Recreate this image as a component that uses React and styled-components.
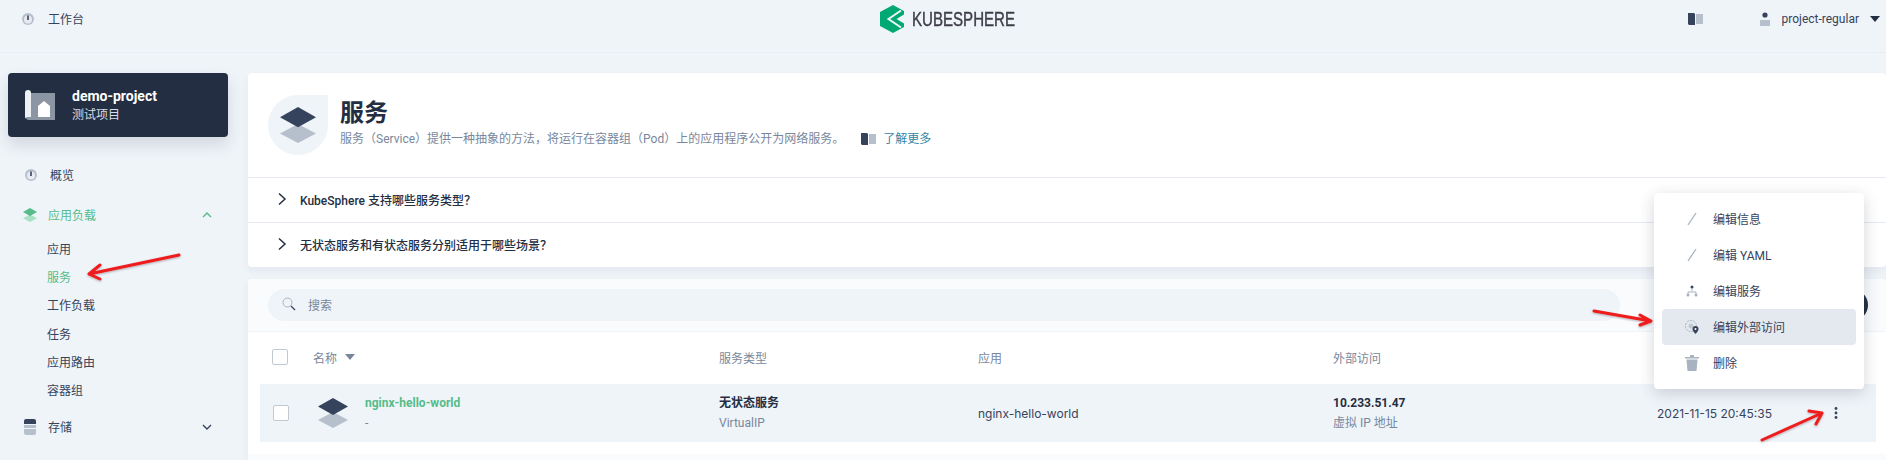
import React from "react";
import styled, { createGlobalStyle } from "styled-components";

const Global = createGlobalStyle`
  html, body { margin: 0; padding: 0; height: 100%; overflow: hidden; background: #eff4f9; }
  body { font-family: Roboto, "Noto Sans CJK SC", sans-serif; font-size: 12px; color: #242e42; }
  * { box-sizing: border-box; }
`;

const Page = styled.div`position: relative; width: 1886px; height: 460px; overflow: hidden; background: #eff4f9;`;
const TopBar = styled.header`
  height: 53px; display: grid; grid-template-columns: 1fr auto 1fr; align-items: start;
  border-bottom: 1px solid #e9eef4; padding: 5px 6px 0 20px;
`;
const TopLeft = styled.div`display: flex; align-items: center; gap: 12px; height: 28px; color: #36435c; padding-bottom: 1px;`;
const Logo = styled.div`display: flex; align-items: center; gap: 8px; height: 28px; margin-left: -6px; width: 134px;`;
const LogoMark = styled.svg`flex: none;`;
const LogoText = styled.span`
  font-family: "Liberation Sans", sans-serif; font-size: 19.5px; color: #3e3d49; font-weight: 400; width: 102px; flex: none;
  display: inline-block; transform: scaleX(.773); transform-origin: left center; white-space: nowrap;
  -webkit-text-stroke: .4px #3e3d49;
`;
const TopRight = styled.div`display: flex; align-items: center; justify-content: flex-end; height: 28px; color: #36435c;`;
const UserName = styled.span`margin: 0 11px 0 12px; font-size: 12px;`;
const Body = styled.div`display: flex; align-items: flex-start;`;
const Side = styled.aside`width: 248px; flex: none; padding: 20px 20px 0 8px;`;
const ProjectCard = styled.div`
  height: 64px; border-radius: 4px; background: #242e42; display: flex; align-items: center; gap: 17px; padding: 0 17px;
  box-shadow: 0 8px 16px rgba(36,46,66,.14); color: #fff;
`;
const ProjectName = styled.div`font-size: 14px; font-weight: 700; line-height: 20px;`;
const ProjectDesc = styled.div`font-size: 12px; color: #d8dee5; line-height: 20px; margin-top: -1px;`;
const Nav = styled.nav`margin-top: 18px; padding-left: 15px;`;
const NavItem = styled.div`
  height: 40px; display: flex; align-items: center; gap: 11px;
  color: ${p => (p.$active ? "#55bc8a" : "#36435c")};
`;
const NavLabel = styled.span`flex: 1; padding-bottom: 2px;`;
const NavChevron = styled.span`display: flex; margin-right: 15px;`;
const SubList = styled.div`padding: 0 0 3px 24px;`;
const SubItem = styled.div`height: 28.2px; display: flex; align-items: center; padding-bottom: 1px; color: ${p => (p.$active ? "#55bc8a" : "#36435c")};`;

const Main = styled.main`flex: 1; min-width: 0; padding-top: 20px; display: flex; flex-direction: column; gap: 12px;`;
const Panel = styled.section`background: #fff; border-radius: 4px; box-shadow: 0 4px 8px rgba(36,46,66,.06); overflow: hidden;`;
const Banner = styled.div`height: 104px; display: flex; align-items: center; gap: 12px; padding: 0 20px;`;
const Bubble = styled.div`
  width: 60px; height: 60px; flex: none; background: #eff4f9; border-radius: 50% 0 50% 50%;
  display: flex; align-items: center; justify-content: center;
`;
const Title = styled.h1`margin: -4px 0 0; font-size: 24px; line-height: 32px; font-weight: 700; color: #242e42;`;
const Sub = styled.div`display: flex; align-items: center; color: #79879c; line-height: 20px;`;
const LearnMore = styled.span`display: inline-flex; align-items: center; gap: 7px; margin-left: 17px; color: #3385a6;`;
const Faq = styled.div`
  height: 45px; border-top: 1px solid #e3e9ef; display: flex; align-items: center; gap: 12px; padding: 0 0 2px 28px;
  font-weight: 500; color: #242e42;
`;
const Toolbar = styled.div`height: 53px; padding: 10px 20px 0; background: #f9fbfd; border-bottom: 1px solid #eff4f9; display: flex;`;
const Search = styled.div`
  width: 1352px; height: 32px; border-radius: 16px; background: #eff4f9; display: flex; align-items: center; gap: 12px; padding: 0 0 2px 14px;
  color: #79879c;
`;
const HeadRow = styled.div`
  height: 52px; display: grid; grid-template-columns: 41px 406px 259px 355px 324px 1fr; align-items: center; padding: 0 0 2px 12px;
  margin-left: 12px; color: #79879c;
`;
const NameHead = styled.div`display: flex; align-items: center; gap: 8px;`;
const Check = styled.span`display: block; width: 16px; height: 16px; border: 1px solid #c1c9d1; border-radius: 2px; background: #fff;`;
const Row = styled.div`
  height: 58px; margin: 0 10px 0 12px; background: #eff4f9; display: grid; padding-left: 13px;
  grid-template-columns: 40px 406px 259px 355px 324px 178px 1fr; align-items: center;
`;
const NameCell = styled.div`display: flex; align-items: center; gap: 17px; padding-left: 5px;`;
const Strong = styled.div`font-weight: 700; line-height: 20px; color: ${p => p.$green ? "#55bc8a" : "#242e42"};`;
const Muted = styled.div`color: #79879c; line-height: 20px;`;
const Plain = styled.div`color: #36435c; font-family: Inter, "Noto Sans CJK SC", sans-serif;`;
const Dots = styled.div`display: flex; margin-left: -1px;`;
const Foot = styled.div`height: 12px; background: #fff;`;
const FootBar = styled.div`height: 40px; background: #f9fbfd;`;
const RoundButton = styled.div`position: absolute; left: 1836px; top: 289px; width: 32px; height: 32px; border-radius: 50%; background: #242e42;`;
const Menu = styled.div`
  position: absolute; left: 1654px; top: 193px; width: 210px; padding: 8px; background: #fff; border-radius: 4px;
  box-shadow: 0 4px 16px rgba(36,46,66,.2);
`;
const MenuItem = styled.div`
  height: 36px; border-radius: 4px; display: flex; align-items: center; padding: 0 0 2px 21px; gap: 12px; color: #36435c;
  background: ${p => (p.$active ? "#e3e9ef" : "transparent")};
`;
const MenuIcon = styled.span`width: 18px; display: flex; justify-content: center; flex: none; padding-top: 2px;`;
const Arrows = styled.svg`position: absolute; left: 0; top: 0; pointer-events: none;`;
const Spacer = styled.span`width: 57px;`;

const Gauge = () => (
  <svg width="16" height="16" viewBox="0 0 16 16"><circle cx="8" cy="8" r="6" fill="#b6c0cd" /><circle cx="8" cy="8.5" r="4" fill="#e6ebf1" /><path d="M8 4.5v4.5" stroke="#36435c" strokeWidth="1.6" /></svg>
);
const Layers = ({ size = 16, top = "#36435c", bottom = "#b6c0cd" }) => (
  <svg width={size} height={size} viewBox="0 0 32 32"><path d="M16 15 32 23.5 16 32 0 23.5Z" fill={bottom} /><path d="M16 0 32 9 16 18 0 9Z" fill={top} /></svg>
);
const Chevron = ({ up }) => (
  <svg width="12" height="12" viewBox="0 0 12 12"><path d={up ? "M2 8l4-4 4 4" : "M2 4l4 4 4-4"} fill="none" stroke={up ? "#55bc8a" : "#36435c"} strokeWidth="1.4" /></svg>
);
const Right = () => (
  <svg width="12" height="14" viewBox="0 0 12 14"><path d="M3 1.5 9 7l-6 5.5" fill="none" stroke="#242e42" strokeWidth="1.5" /></svg>
);
const Book = () => (
  <svg width="15" height="12" viewBox="0 0 15 12"><path d="M0 0h6l1 1v11H1l-1-1Z" fill="#36435c" /><path d="M8 1h7v10H8Z" fill="#b6c0cd" /></svg>
);
const Caret = ({ color = "#242e42" }) => <svg width="10" height="6" viewBox="0 0 10 6"><path d="M0 0h10L5 6Z" fill={color} /></svg>;
const Pen = () => <svg width="14" height="16" viewBox="0 0 14 16"><path d="M11 2 3 14" stroke="#a8b3c1" strokeWidth="1.3" /></svg>;

export default function App() {
  return (
    <Page>
      <Global />
      <TopBar>
        <TopLeft><Gauge />工作台</TopLeft>
        <Logo>
          <LogoMark width="24" height="28" viewBox="0 0 24 28">
            <path d="M13 0 24 6 24 22 13 28 0 21V7Z" fill="#00a971" />
            <path d="M24 9.5 16.5 14 24 18.5Z" fill="#eff4f9" />
            <path d="M21 5.5 8.5 14 21 22.5" fill="none" stroke="#eff4f9" strokeWidth="2" />
          </LogoMark>
          <LogoText>KUBESPHERE</LogoText>
        </Logo>
        <TopRight>
          <Book />
          <Spacer />
          <svg width="10" height="14" viewBox="0 0 10 14"><circle cx="5" cy="3" r="2.6" fill="#36435c" /><path d="M0 8h10v6H0Z" fill="#b6c0cd" /></svg>
          <UserName>project-regular</UserName>
          <Caret />
        </TopRight>
      </TopBar>
      <Body>
        <Side>
          <ProjectCard>
            <svg width="30" height="30" viewBox="0 0 30 30"><path d="M6 3h24v27H3l-3-2V3Z" fill="#8b95a4" /><path d="M0 3q0-3 3-3t3 3v24H2l-2 1Z" fill="#eef1f4" /><path d="M13 16l6-5 6 5v11H13Z" fill="#fff" /></svg>
            <div><ProjectName>demo-project</ProjectName><ProjectDesc>测试项目</ProjectDesc></div>
          </ProjectCard>
          <Nav>
            <NavItem><Gauge /><NavLabel>概览</NavLabel></NavItem>
            <NavItem $active><Layers size={14} top="#55bc8a" bottom="#a9e1c5" /><NavLabel>应用负载</NavLabel><NavChevron><Chevron up /></NavChevron></NavItem>
            <SubList>
              <SubItem>应用</SubItem>
              <SubItem $active>服务</SubItem>
              <SubItem>工作负载</SubItem>
              <SubItem>任务</SubItem>
              <SubItem>应用路由</SubItem>
              <SubItem>容器组</SubItem>
            </SubList>
            <NavItem>
              <svg width="14" height="16" viewBox="0 0 14 16"><path d="M2 0h8a2 2 0 0 1 2 2v3H0V2a2 2 0 0 1 2-2Z" fill="#36435c" transform="translate(1 0)" /><path d="M1 6h12v3H1Z" fill="#b6c0cd" /><path d="M1 10h12v4a2 2 0 0 1-2 2H3a2 2 0 0 1-2-2Z" fill="#b6c0cd" /></svg>
              <NavLabel>存储</NavLabel><NavChevron><Chevron /></NavChevron>
            </NavItem>
          </Nav>
        </Side>
        <Main>
          <Panel>
            <Banner>
              <Bubble><Layers size={36} /></Bubble>
              <div>
                <Title>服务</Title>
                <Sub>服务（Service）提供一种抽象的方法，将运行在容器组（Pod）上的应用程序公开为网络服务。<LearnMore><Book />了解更多</LearnMore></Sub>
              </div>
            </Banner>
            <Faq><Right />KubeSphere 支持哪些服务类型？</Faq>
            <Faq><Right />无状态服务和有状态服务分别适用于哪些场景？</Faq>
          </Panel>
          <Panel>
            <Toolbar>
              <Search>
                <svg width="14" height="14" viewBox="0 0 14 14"><circle cx="5.5" cy="5.5" r="4.5" fill="none" stroke="#a8b3c1" /><path d="M9 9l4 4" stroke="#36435c" strokeWidth="1.2" /></svg>
                搜索
              </Search>
            </Toolbar>
            <HeadRow>
              <Check />
              <NameHead>名称<Caret color="#79879c" /></NameHead>
              <div>服务类型</div>
              <div>应用</div>
              <div>外部访问</div>
              <div />
            </HeadRow>
            <Row>
              <Check />
              <NameCell>
                <Layers size={30} />
                <div><Strong $green>nginx-hello-world</Strong><Muted>-</Muted></div>
              </NameCell>
              <div><Strong>无状态服务</Strong><Muted>VirtualIP</Muted></div>
              <Plain>nginx-hello-world</Plain>
              <div><Strong>10.233.51.47</Strong><Muted>虚拟 IP 地址</Muted></div>
              <Plain>2021-11-15 20:45:35</Plain>
              <Dots><svg width="4" height="12" viewBox="0 0 4 12"><circle cx="2" cy="1.5" r="1.4" fill="#36435c" /><circle cx="2" cy="6" r="1.4" fill="#36435c" /><circle cx="2" cy="10.5" r="1.4" fill="#36435c" /></svg></Dots>
            </Row>
            <Foot />
            <FootBar />
          </Panel>
        </Main>
      </Body>
      <RoundButton />
      <Menu>
        <MenuItem><MenuIcon><Pen /></MenuIcon>编辑信息</MenuItem>
        <MenuItem><MenuIcon><Pen /></MenuIcon>编辑 YAML</MenuItem>
        <MenuItem>
          <MenuIcon><svg width="14" height="14" viewBox="0 0 14 14"><circle cx="7" cy="3" r="1.5" fill="#36435c" /><path d="M7 4v3M3 11V8h8v3" fill="none" stroke="#a8b3c1" /><circle cx="3" cy="11" r="1.5" fill="#a8b3c1" /><circle cx="11" cy="11" r="1.5" fill="#a8b3c1" /></svg></MenuIcon>编辑服务
        </MenuItem>
        <MenuItem $active>
          <MenuIcon><svg width="16" height="16" viewBox="0 0 16 16"><circle cx="7" cy="7" r="5.5" fill="none" stroke="#a8b3c1" strokeDasharray="2 1" /><circle cx="7" cy="7" r="2.5" fill="#c1c9d1" /><path d="M11.5 7a3 3 0 0 1 3 3c0 2-3 5-3 5s-3-3-3-5a3 3 0 0 1 3-3Z" fill="#36435c" /><circle cx="11.5" cy="10" r="1" fill="#fff" /></svg></MenuIcon>编辑外部访问
        </MenuItem>
        <MenuItem>
          <MenuIcon><svg width="14" height="16" viewBox="0 0 14 16"><path d="M0 2h14v1.5H0Z" fill="#a8b3c1" /><path d="M5 0h4v2H5Z" fill="#a8b3c1" /><path d="M1.5 4.5h11L11.5 16h-9Z" fill="#a8b3c1" /></svg></MenuIcon>删除
        </MenuItem>
      </Menu>
      <Arrows width="1886" height="460" viewBox="0 0 1886 460">
        <defs>
          <filter id="s" x="-20%" y="-50%" width="140%" height="200%"><feDropShadow dx="0" dy="1" stdDeviation="1" floodColor="#000" floodOpacity=".3" /></filter>
        </defs>
        <g fill="none" stroke="#ee1c1c" strokeWidth="3" strokeLinecap="round" strokeLinejoin="round" filter="url(#s)">
          <path d="M179 255 89 274M100 265l-11 9 11 5" />
          <path d="M1594 311 1651 321M1640 315l11 6-11 4" />
          <path d="M1762 440 1822 413M1809 411l13 2-6 11" />
        </g>
      </Arrows>
    </Page>
  );
}
